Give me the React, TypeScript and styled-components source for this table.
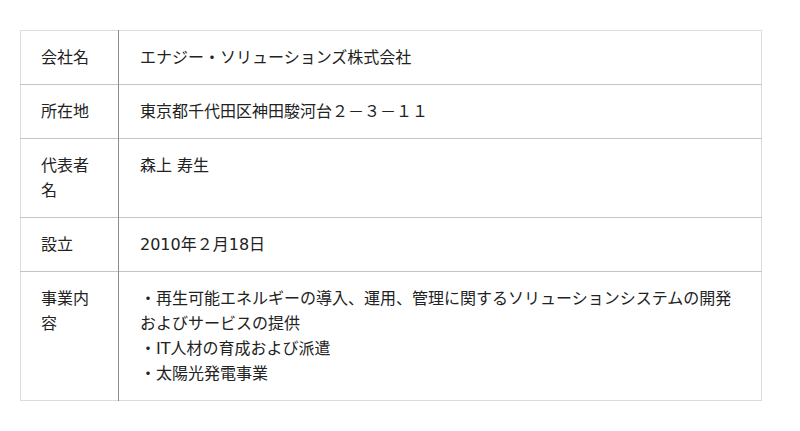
import styled, { createGlobalStyle } from 'styled-components';

const GlobalStyle = createGlobalStyle`
  body {
    margin: 0;
    background: #fff;
    color: #222;
    font-family: 'DejaVu Sans', 'Noto Sans CJK JP', sans-serif;
  }
`;

const Page = styled.div`
  padding: 30px 38px 30px 20px;
`;

const InfoTable = styled.table`
  width: 742px;
  border-collapse: collapse;
  border: 1px solid #dcdcdc;
  font-size: 16px;
  line-height: 25px;
`;

const Row = styled.tr`
  border-bottom: 1px solid #c4c4c4;

  &:last-child {
    border-bottom: 1px solid #dcdcdc;
  }
`;

const Label = styled.th`
  width: 57px;
  padding: 14px 20px 14px 20px;
  text-align: left;
  vertical-align: top;
  font-weight: normal;
  border-right: 1px solid #8c8c8c;
`;

const Value = styled.td`
  padding: 14px 21px 14px 21px;
  vertical-align: top;
`;

const rows: { label: string; value: string[] }[] = [
  { label: '会社名', value: ['エナジー・ソリューションズ株式会社'] },
  { label: '所在地', value: ['東京都千代田区神田駿河台２－３－１１'] },
  { label: '代表者名', value: ['森上 寿生'] },
  { label: '設立', value: ['2010年２月18日'] },
  {
    label: '事業内容',
    value: [
      '・再生可能エネルギーの導入、運用、管理に関するソリューションシステムの開発およびサービスの提供',
      '・IT人材の育成および派遣',
      '・太陽光発電事業',
    ],
  },
];

const App = () => (
  <>
    <GlobalStyle />
    <Page>
      <InfoTable>
        <tbody>
          {rows.map((row) => (
            <Row key={row.label}>
              <Label>{row.label}</Label>
              <Value>
                {row.value.map((line, i) => (
                  <div key={i}>{line}</div>
                ))}
              </Value>
            </Row>
          ))}
        </tbody>
      </InfoTable>
    </Page>
  </>
);

export default App;
